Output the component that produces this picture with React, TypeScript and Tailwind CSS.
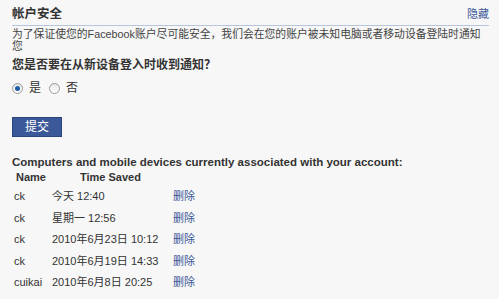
import React from "react";

const DEVICES = [
  { name: "ck", time: "今天 12:40" },
  { name: "ck", time: "星期一 12:56" },
  { name: "ck", time: "2010年6月23日 10:12" },
  { name: "ck", time: "2010年6月19日 14:33" },
  { name: "cuikai", time: "2010年6月8日 20:25" },
];

const font = "font-['Liberation_Sans','Noto_Sans_CJK_SC',sans-serif]";

function Radio({ checked, label }: { checked: boolean; label: string }) {
  return (
    <label className="flex h-[14px] items-center gap-[6px] cursor-pointer">
      <span className="flex size-[11px] items-center justify-center rounded-full border border-[#9a9a9a] bg-gradient-to-b from-[#e6e6e6] to-[#ffffff]">
        {checked && <span className="size-[5px] rounded-full bg-[#1f5fa8]" />}
      </span>
      <span className="text-[12px] leading-[14px] text-[#333]">{label}</span>
    </label>
  );
}

export default function App() {
  return (
    <div className={`h-[299px] w-[499px] overflow-hidden bg-[#f7f7f7] pl-[12px] pr-[10px] pt-[7px] text-[#333] ${font}`}>
      <div className="flex items-end justify-between border-b border-[#b7c5e0] pb-[4px]">
        <h3 className="text-[12.5px] font-bold leading-[14px] text-[#333]">帐户安全</h3>
        <a className="text-[11px] leading-[14px] text-[#3b5998] cursor-pointer">隐藏</a>
      </div>
      <p className="mr-[4px] mt-[2px] text-[10.8px] leading-[12px] text-[#444]">
        为了保证使您的Facebook账户尽可能安全，我们会在您的账户被未知电脑或者移动设备登陆时通知您
      </p>
      <p className="mt-[6px] text-[12px] font-bold leading-[14px]">您是否要在从新设备登入时收到通知？</p>
      <div className="mt-[9px] flex gap-[8px]">
        <Radio checked label="是" />
        <Radio checked={false} label="否" />
      </div>
      <button
        type="button"
        className="mt-[22px] block h-[20px] w-[50px] border border-[#29447e] bg-[#3b5998] text-[12px] leading-[18px] text-white"
      >
        提交
      </button>

      <p className="mt-[18px] text-[11.5px] font-bold leading-[14px]">
        Computers and mobile devices currently associated with your account:
      </p>
      <div className="mt-[1px] grid grid-cols-[40px_121px_auto] text-[11px]">
        <span className="pl-[4px] font-bold leading-[14px]">Name</span>
        <span className="col-span-2 pl-[28px] font-bold leading-[14px]">Time Saved</span>
        <span className="col-span-3 h-[2px]" />
        {DEVICES.map((d, i) => (
          <React.Fragment key={i}>
            <span className="pl-[2px] leading-[21.5px]">{d.name}</span>
            <span className="leading-[21.5px]">{d.time}</span>
            <a className="leading-[21.5px] text-[#3b5998] cursor-pointer">删除</a>
          </React.Fragment>
        ))}
      </div>
    </div>
  );
}
